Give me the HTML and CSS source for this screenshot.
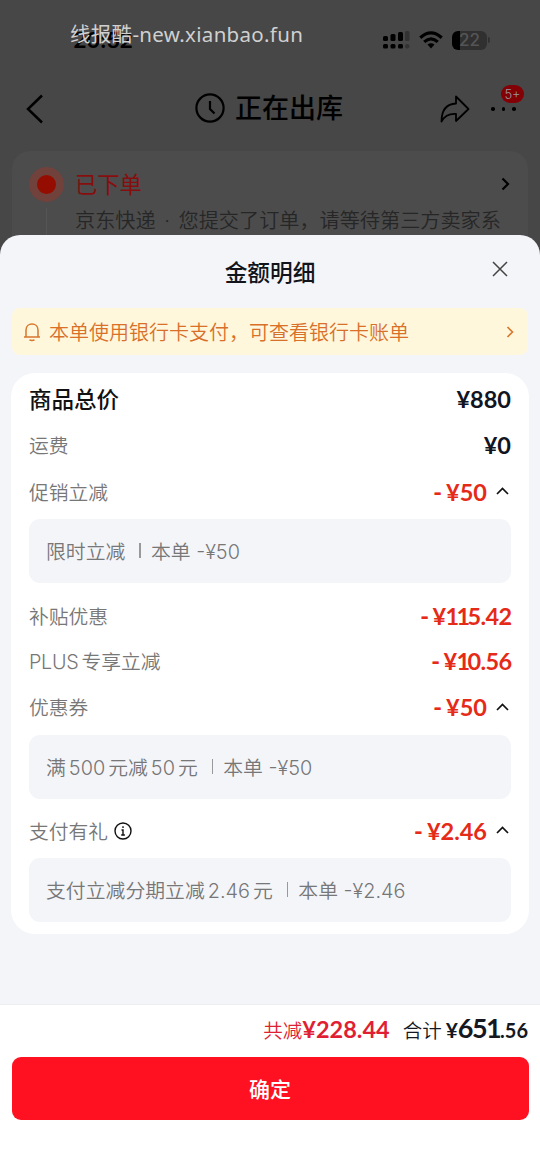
FILE: index.html
```html
<!DOCTYPE html>
<html lang="zh-CN">
<head>
<meta charset="utf-8">
<title>金额明细</title>
<link rel="stylesheet" href="styles.css">
</head>
<body>
<div class="screen">
  <div class="order-page">
    <div class="status-bar">
      <span class="clock">20:52</span>
      <span class="watermark">线报酷-new.xianbao.fun</span>
      <svg class="signal" width="27" height="18" viewBox="0 0 27 18"><g fill="#000"><rect x="0" y="5" width="5" height="5" rx="1.5"/><rect x="7.5" y="3" width="5" height="7" rx="1.5"/><rect x="15" y="1" width="5" height="9" rx="1.5"/><rect x="0" y="13" width="5" height="4.500" rx="1.500"/><rect x="7.500" y="13" width="5" height="4.500" rx="1.500"/><rect x="15" y="13" width="5" height="4.500" rx="1.500"/></g><g fill="#333"><rect x="22" y="0" width="4.500" height="10" rx="1.500"/><rect x="22" y="13" width="4.500" height="4.500" rx="2"/></g></svg>
      <svg class="wifi" width="24" height="18" viewBox="0 0 24 18" fill="none" stroke="#000" stroke-width="3.200"><path d="M1.300 6.700Q12-3 22.700 6.700M5.200 10.900Q12 4.700 18.800 10.900"/><path d="M8.500 13.600Q12 10.700 15.500 13.600L12 17.500Z" fill="#000" stroke="none"/></svg>
      <span class="battery"><span class="battery-text">22</span></span><i class="battery-tip"></i>
    </div>
    <div class="nav">
      <svg class="back" width="20" height="30" viewBox="0 0 20 30" fill="none" stroke="#000" stroke-width="2.500"><path d="M17 1.500 3 15l14 13.500"/></svg>
      <div class="nav-title">
        <svg width="30" height="30" viewBox="0 0 30 30" fill="none" stroke="#000" stroke-width="2.200"><circle cx="15" cy="15" r="13.600"/><path d="M15 8v8l4.500 4.500"/></svg>
        <span>正在出库</span>
      </div>
      <svg class="share" width="30" height="28" viewBox="0 0 30 28" fill="none" stroke="#000" stroke-width="1.800" stroke-linejoin="round"><path d="M16 1.500 28.500 14 16 26v-7C9 18.500 4.500 21 1.500 26.500 1.500 15 7 9 16 8.500Z"/></svg>
      <div class="more"><i></i><i></i><i></i><span class="badge">5+</span></div>
    </div>
    <div class="status-card">
      <div class="rail"><span class="dot"></span><span class="line"></span></div>
      <div class="status-body">
        <div class="status-head"><span>已下单</span><svg width="9" height="14" viewBox="0 0 9 14" fill="none" stroke="#000" stroke-width="2.200"><path d="m1.500 1.500 5.500 5.500-5.500 5.500"/></svg></div>
        <p class="status-desc">京东快递<span class="mid">·</span>您提交了订单，请等待第三方卖家系</p>
      </div>
    </div>
  </div>

  <div class="sheet">
    <div class="sheet-head">
      <h1>金额明细</h1>
      <svg class="close" width="16" height="16" viewBox="0 0 16 16" fill="none" stroke="#444" stroke-width="1.500"><path d="m1 1 14 14M15 1 1 15"/></svg>
    </div>
    <div class="notice">
      <svg width="18" height="20" viewBox="0 0 18 20" fill="none" stroke="#d8762c" stroke-width="1.500"><path d="M1 15h16M3 15V8c0-8 12-8 12 0v7M6.500 18q2.500.8 5 0"/></svg>
      <span>本单使用银行卡支付，可查看银行卡账单</span>
      <svg class="notice-arrow" width="8" height="12" viewBox="0 0 8 12" fill="none" stroke="#d8762c" stroke-width="1.600"><path d="m1.500 1 5 5-5 5"/></svg>
    </div>
    <div class="bill">
      <div class="row total"><span class="label">商品总价</span><span class="price">¥880</span></div>
      <div class="row fee"><span class="label">运费</span><span class="price">¥0</span></div>
      <div class="row promo"><span class="label">促销立减</span><span class="price off"><b>-</b>¥50</span><svg class="caret" width="13" height="8" viewBox="0 0 13 8"><path d="m1 7 5.500-5.500L12 7"/></svg></div>
      <div class="detail"><span>限时立减</span><i></i><span>本单 -¥50</span></div>
      <div class="row subsidy"><span class="label">补贴优惠</span><span class="price off tight"><b>-</b>¥<span class="ones">11</span>5.42</span></div>
      <div class="row plus"><span class="label"><em>PLUS</em>专享立减</span><span class="price off tight"><b>-</b>¥<span class="ones">1</span>0.56</span></div>
      <div class="row coupon"><span class="label">优惠券</span><span class="price off"><b>-</b>¥50</span><svg class="caret" width="13" height="8" viewBox="0 0 13 8"><path d="m1 7 5.500-5.500L12 7"/></svg></div>
      <div class="detail"><span>满<em>500</em>元减<em>50</em>元</span><i></i><span>本单 -¥50</span></div>
      <div class="row gift"><span class="label">支付有礼</span><svg class="info" width="18" height="18" viewBox="0 0 18 18" fill="none" stroke="#111" stroke-width="1.400"><circle cx="9" cy="9" r="8"/><path d="M9 4.300v1.800M7.500 8H9v5M7.200 13h3.700"/></svg><span class="price off"><b>-</b>¥2.46</span><svg class="caret" width="13" height="8" viewBox="0 0 13 8"><path d="m1 7 5.500-5.500L12 7"/></svg></div>
      <div class="detail"><span>支付立减分期立减<em>2.46</em>元</span><i></i><span>本单 -¥2.46</span></div>
    </div>
    <div class="footer">
      <div class="sum"><span class="saved">共减</span><span class="saved-num">¥228.44</span><span class="sum-label">合计</span><span class="yen">¥</span><span class="int">651</span><span class="dec">.56</span></div>
      <button class="confirm">确定</button>
    </div>
  </div>
</div>
</body>
</html>
```
FILE: styles.css
```css
* { box-sizing: border-box; }
body { margin: 0; }
h1, p { margin: 0; }
i, em { font-style: normal; }
svg { display: block; flex: none; }

.screen {
  position: relative;
  width: 540px;
  height: 1173px;
  overflow: hidden;
  background: #474747;
  font-family: Inter, "Noto Sans CJK SC", sans-serif;
  font-weight: 350;
  white-space: nowrap;
}

/* Dimmed order page */
.order-page { height: 270px; }
.status-bar {
  position: relative;
  display: flex;
  align-items: center;
  height: 80px;
  padding-left: 383px;
}
.clock {
  position: absolute;
  left: 73px;
  top: 26px;
  font-size: 22px;
  line-height: 28px;
  font-weight: 600;
  letter-spacing: -.7px;
  color: #000;
}
.watermark {
  position: absolute;
  left: 70px;
  top: 20px;
  font: 400 20.500px/28px "Noto Sans", "Noto Sans CJK SC", sans-serif;
  letter-spacing: .3px;
  color: #d0d0d0;
}
.wifi { margin-left: 9px; }
.battery {
  width: 35px;
  height: 19px;
  margin-left: 9px;
  border-radius: 6px;
  background: linear-gradient(90deg, #000 8px, #303030 8px);
  color: #555;
  font-size: 17px;
  line-height: 19px;
  font-weight: 500;
  text-align: center;
}
.battery-tip { width: 2px; height: 6px; margin-left: 1px; border-radius: 0 2px 2px 0; background: #303030; }
.nav {
  display: flex;
  align-items: center;
  height: 58px;
  padding-left: 25px;
}
.nav-title {
  display: flex;
  align-items: center;
  gap: 10px;
  width: 245px;
  margin-left: 150px;
  padding-bottom: 2px;
  font-size: 27px;
  line-height: 32px;
  font-weight: 500;
  color: #000;
}
.nav-title span { margin-top: 2px; }
.more {
  position: relative;
  display: flex;
  gap: 7px;
  margin-left: 21px;
}
.more i { width: 3.500px; height: 3.500px; border-radius: 50%; background: #000; }
.badge {
  position: absolute;
  left: 10px;
  top: -22px;
  width: 23px;
  height: 18px;
  border-radius: 9px;
  background: #820006;
  color: #999;
  font-size: 13px;
  line-height: 18px;
  text-align: center;
}
.status-card {
  display: flex;
  height: 132px;
  margin: 13px 12px 0;
  padding: 16px 18px 0 16.500px;
  border-radius: 18px;
  background: #4c4c4c;
}
.rail { display: flex; flex-direction: column; align-items: center; width: 35px; }
.dot { width: 35px; height: 35px; border: 8px solid #71413c; border-radius: 50%; background: #940d00; }
.line { width: 1px; height: 60px; margin-top: 6px; background: #555; }
.status-body { flex: 1; padding-left: 11.500px; }
.status-head {
  display: flex;
  align-items: center;
  justify-content: space-between;
  height: 34px;
  font-size: 22.300px;
  font-weight: 400;
  color: #860e0e;
}
.status-head span { padding-bottom: 2px; }
.status-desc { font-size: 20.150px; line-height: 40px; color: #262626; }
.mid { display: inline-block; width: 23px; text-align: center; }

/* Bottom sheet laid over the page */
.sheet {
  position: absolute;
  left: 0;
  top: 235px;
  display: flex;
  flex-direction: column;
  width: 540px;
  height: 938px;
  border-radius: 20px 20px 0 0;
  overflow: hidden;
  background: #f4f5f9;
}
.sheet-head {
  display: grid;
  grid-template-columns: 1fr auto 1fr;
  align-items: center;
  height: 73px;
}
.sheet-head h1 { grid-column: 2; padding-top: 2px; font-size: 22.700px; font-weight: 500; line-height: 30px; color: #11141a; }
.close { justify-self: end; margin: 0 32px 5px 0; }
.notice {
  display: flex;
  align-items: center;
  height: 47px;
  margin: 0 12px;
  padding: 0 14px 0 11px;
  border-radius: 8px;
  background: #fff7dc;
  color: #d8702a;
  font-size: 20px;
}
.notice span { margin-left: 8px; }
.notice-arrow { margin-left: auto; }
.bill {
  height: 561px;
  margin: 18px 11px 0;
  padding: 2px 18px 0;
  border-radius: 24px;
  background: #fff;
}
.row { display: flex; align-items: center; height: 47px; font-size: 19.800px; color: #777; }
.row.fee { height: 46px; }
.row.promo { margin-bottom: 4px; }
.row.plus, .row.coupon { height: 46px; }
.row.subsidy { height: 45px; margin-top: 10px; }
.row.gift { margin-top: 8px; margin-bottom: 4px; }
.row.coupon { margin-bottom: 5px; }
.label { padding-bottom: 1px; }
.total .label { padding-bottom: 2px; font-size: 22.500px; font-weight: 500; color: #111; }
.price { margin-left: auto; font-family: Lato, sans-serif; font-size: 23.500px; font-weight: 700; color: #111422; }
.off { color: #e52a18; }
.off b { margin-right: 4px; }
.tight { margin-right: -.6px; letter-spacing: -.6px; }
.ones { letter-spacing: -2.600px; }
.caret { margin: 0 2px 1px 9px; fill: none; stroke: #111; stroke-width: 1.700; }
.info { margin-left: 6px; }
.label em { margin-right: 3px; letter-spacing: -.3px; }
.detail {
  display: flex;
  align-items: center;
  height: 64px;
  padding: 0 0 1px 17px;
  border-radius: 11px;
  background: #f4f5f9;
  color: #777;
  font-size: 19.850px;
}
.detail i { width: 1.500px; height: 15px; margin: 0 10px 0 14px; background: #999; }
.detail em { margin: 0 3px; }

/* Totals and confirmation */
.footer {
  margin-top: auto;
  height: 169px;
  padding: 0 12px 0 11.500px;
  border-top: 1px solid #eceef0;
  background: #fff;
}
.sum {
  display: flex;
  align-items: baseline;
  justify-content: flex-end;
  height: 52px;
  line-height: 45px;
  font-size: 19.500px;
  color: #15181f;
}
.saved { color: #e01f35; }
.saved-num, .yen, .int, .dec { font-family: Lato, sans-serif; font-weight: 700; }
.saved-num { margin-right: 13px; font-size: 23.500px; color: #e01f35; }
.sum-label { margin-right: 4px; }
.yen { font-size: 21px; }
.int { font-size: 27px; letter-spacing: -1.600px; }
.dec { font-size: 20px; }
.confirm {
  display: block;
  width: 517px;
  height: 63px;
  padding: 0;
  border: 0;
  border-radius: 9px;
  background: #ff1122;
  color: #fff;
  font: 500 21px/63px "Noto Sans CJK SC", sans-serif;
}
```
